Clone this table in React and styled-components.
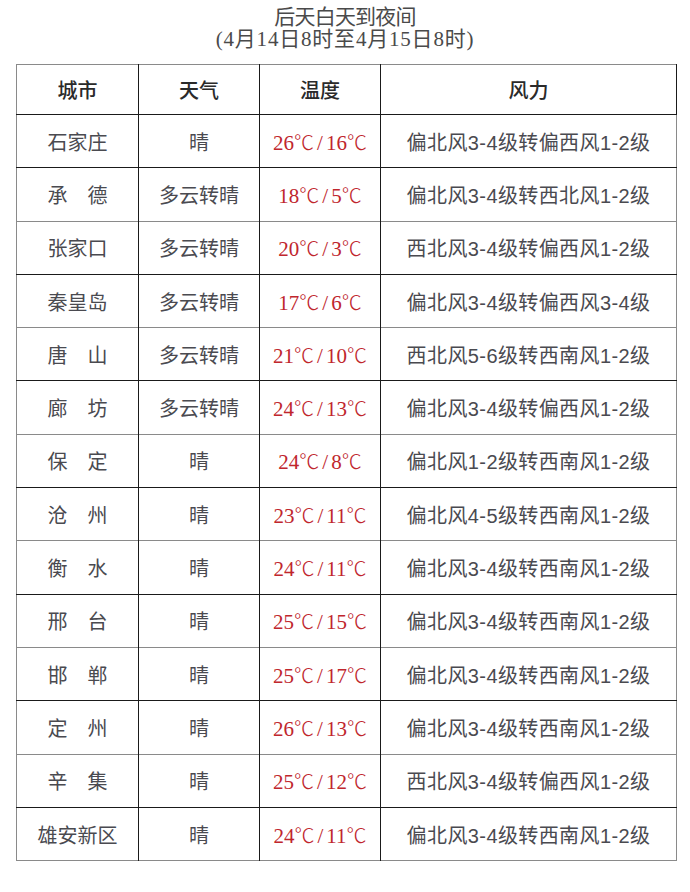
import React from 'react';
import styled, { createGlobalStyle } from 'styled-components';

const GlobalStyle = createGlobalStyle`
  body {
    margin: 0;
    background: #ffffff;
    font-family: "Liberation Serif", "Noto Sans CJK SC", serif;
  }
`

const Page = styled.div`
  width: 690px;
  height: 892px;
  background: #fff;
  padding-top: 6px;
  box-sizing: border-box;
`

const Title = styled.div`
  text-align: center;
  color: #4a4a4a;
  font-size: 21px;
  line-height: 22px;
  letter-spacing: ${p => p.$tight ? '-0.8px' : '0.8px'};
`

const Table = styled.table`
  margin: 14px 0 0 16px;
  width: 660px;
  border-collapse: collapse;
  table-layout: fixed;
  border: 1.5px solid #8a8a8a;
`

const Head = styled.th`
  height: 47px;
  font-weight: 500;
  font-size: 20px;
  color: #2a2a2a;
  border: 1.5px solid #1a1a1a;
  border-top: none;
  border-left: ${p => p.$first ? 'none' : '1.5px solid #1a1a1a'};
  font-family: "Noto Sans CJK SC", sans-serif;
`

const Cell = styled.td`
  height: 52.3px;
  text-align: center;
  font-size: ${p => p.$hot ? '21px' : '20px'};
  letter-spacing: ${p => p.$wind ? '0.4px' : '0'};
  color: ${p => p.$hot ? '#c0262d' : '#4a4a50'};
  border-left: ${p => p.$first ? 'none' : '1.5px solid #1a1a1a'};
  border-top: 1.5px solid ${p => p.$dark ? '#1a1a1a' : '#8a8a8a'};
  font-family: ${p => p.$wind
    ? '"Liberation Sans", "Noto Sans CJK SC", sans-serif'
    : '"Liberation Serif", "Noto Sans CJK SC", serif'};
  white-space: nowrap;
  padding: 0;
`

const Deg = styled.span`
  font-family: "Noto Sans CJK SC", sans-serif;
  font-size: 20px;
  font-weight: 300;
`

const Slash = styled.span`
  margin: 0 3px;
`

const Temp = ({ value }) => {
  const [hi, lo] = value.split('/')
  return (
    <>
      {hi}<Deg>℃</Deg><Slash>/</Slash>{lo}<Deg>℃</Deg>
    </>
  )
}

const rows = [
  ['石家庄', '晴', '26/16', '偏北风3-4级转偏西风1-2级'],
  ['承\u3000德', '多云转晴', '18/5', '偏北风3-4级转西北风1-2级'],
  ['张家口', '多云转晴', '20/3', '西北风3-4级转偏西风1-2级'],
  ['秦皇岛', '多云转晴', '17/6', '偏北风3-4级转偏西风3-4级'],
  ['唐\u3000山', '多云转晴', '21/10', '西北风5-6级转西南风1-2级'],
  ['廊\u3000坊', '多云转晴', '24/13', '偏北风3-4级转偏西风1-2级'],
  ['保\u3000定', '晴', '24/8', '偏北风1-2级转西南风1-2级'],
  ['沧\u3000州', '晴', '23/11', '偏北风4-5级转西南风1-2级'],
  ['衡\u3000水', '晴', '24/11', '偏北风3-4级转西南风1-2级'],
  ['邢\u3000台', '晴', '25/15', '偏北风3-4级转西南风1-2级'],
  ['邯\u3000郸', '晴', '25/17', '偏北风3-4级转西南风1-2级'],
  ['定\u3000州', '晴', '26/13', '偏北风3-4级转西南风1-2级'],
  ['辛\u3000集', '晴', '25/12', '西北风3-4级转偏西风1-2级'],
  ['雄安新区', '晴', '24/11', '偏北风3-4级转西南风1-2级'],
]

const App = () => {
  return (
    <Page>
      <GlobalStyle />
      <Title $tight>后天白天到夜间</Title>
      <Title>(4月14日8时至4月15日8时)</Title>
      <Table>
        <colgroup>
          <col style={{ width: 122 }} />
          <col style={{ width: 121 }} />
          <col style={{ width: 121 }} />
          <col style={{ width: 296 }} />
        </colgroup>
        <thead>
          <tr>
            <Head $first>城市</Head>
            <Head>天气</Head>
            <Head>温度</Head>
            <Head>风力</Head>
          </tr>
        </thead>
        <tbody>
          {rows.map((r, i) => (
            <tr key={i}>
              <Cell $first $dark={i % 2 === 1}>{r[0]}</Cell>
              <Cell $dark={i % 2 === 1}>{r[1]}</Cell>
              <Cell $hot $dark={i % 2 === 1}><Temp value={r[2]} /></Cell>
              <Cell $wind $dark={i % 2 === 1}>{r[3]}</Cell>
            </tr>
          ))}
        </tbody>
      </Table>
    </Page>
  )
}

export default App;
